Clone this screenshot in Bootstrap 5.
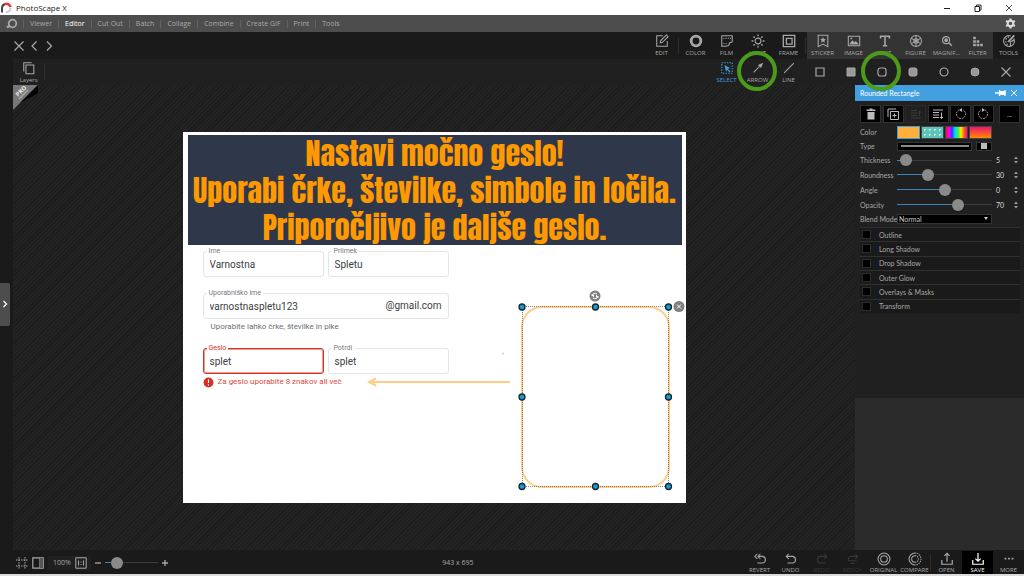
<!DOCTYPE html>
<html lang="en">
<head>
<meta charset="utf-8">
<meta name="viewport" content="width=device-width, initial-scale=1">
<title>PhotoScape X</title>
<link href="https://cdn.jsdelivr.net/npm/bootstrap@5.3.0/dist/css/bootstrap.min.css" rel="stylesheet">
<script src="https://cdn.jsdelivr.net/npm/bootstrap@5.3.0/dist/js/bootstrap.bundle.min.js" defer></script>
<style>
:root{--ui:"Open Sans","Noto Sans",sans-serif;--ink:#a8a8a8;--accent:#42a0e0}
body{font-family:var(--ui);font-size:7px;line-height:10px;background:#1a1a1a;color:var(--ink)}
button,input,select{font:inherit;color:inherit;background:none;border:0;padding:0;border-radius:0}
svg{display:block;flex:none}
svg:not([fill]){fill:none}
svg:not([stroke]){stroke:currentColor}
.ic{width:14px;height:14px}
.titlebar{height:15px;background:#fff;color:#222;font-size:8px}
.titlebar button{width:31px;height:15px}
.menubar{height:17px;background:#4d4d4d}
.menubar a{color:#a9a9a9;text-decoration:none;padding:0 6px;border-left:1px solid #626262;line-height:8px}
.menubar a.current{color:#fff}
.toolrow{height:27px;padding-left:13px}
.tool{width:31px;height:27px;display:flex;flex-direction:column;align-items:center;justify-content:center;gap:1px;font-size:6px;line-height:8px;white-space:nowrap;position:relative;flex:none}
.bright{background:#333}
.rule{width:1px;height:16px;background:#2e2e2e;flex:none}
.toolrow .rule{margin:0 1px}
.optrow{min-height:26px;margin-left:13px;padding-right:3px;background:#202020}
.optrow .tool{height:26px}
.picked{color:#3f9fe0}
.ringed::after{content:"";position:absolute;width:40px;height:40px;left:-5px;top:-8px;border:4px solid #4c9a1a;border-radius:50%;z-index:5}
.edge{width:13px;padding-bottom:27px}
.edge button{width:10px;height:43px;background:#4d4d4d;color:#fff;border-radius:0 2px 2px 0}
.stage{background:repeating-linear-gradient(135deg,#1c1c1c 0 1px,#232323 1px 3px)}
.pro{position:absolute;left:0;top:0}
.photo{width:503px;min-height:371px;background:#fff;padding:3px 4px 0 5px;font-family:Roboto,sans-serif;color:#3c4043}
.headline{background:#2f384a;color:#ff9900;height:110px;margin:0 0 6px;font:400 30px/37px Impact,Anton,"Roboto Condensed",sans-serif;white-space:nowrap;text-align:center}
.signup{width:246px;margin-left:15px}
.field{position:relative;height:26px;border:1px solid #e3e5e8;border-radius:3px;font-size:10px;display:flex;align-items:center;padding:0 6px}
.field label{position:absolute;left:3px;top:-5px;padding:0 2px;background:#fff;font-size:7px;line-height:8px;color:#777b80}
.field input{width:100%;min-width:0;height:20px}
.field.bad{border-color:#d93025;box-shadow:inset 0 0 0 1px #eb9a94}
.field.bad label{color:#d93025}
.hint{font-size:8px;line-height:16px;color:#6b6f74}
.hint.bad{color:#dc4a40}
.passwords{margin-top:13px}
.shape{position:absolute;left:184px;top:156px}
.panel{width:169px;background:#202020;font-family:Lato,sans-serif}
.panelhead{background:var(--accent);color:#fff;height:16px;padding:0 6px 0 5px}
.panelbody{padding:4px 4px 0 5px}
.actions{margin-bottom:2px}
.sq{width:21px;height:18px;background:#000;border:1px solid #303030;display:flex;align-items:center;justify-content:center;color:#bbb}
.sq:disabled{background:none;color:#3a3a3a;border-color:#292929}
.prop{display:grid;grid-template-columns:37px 95px 1fr;align-items:center;height:15px}
.prop.tight{height:14px}
.swatch{width:23px;height:13px;border:1px solid #444}
.swatch.on{border-color:var(--accent)}
.s1{background:#ffb03b}
.s2{background:radial-gradient(#dff0c0 1px,transparent 1px) 0 0/5px 5px #5cc5bd}
.s3{background:linear-gradient(90deg,#f03,#f0f,#33f,#0df,#3e5,#fe0,#f60,#f0a)}
.s4{background:linear-gradient(#f0146e,#ff8a00)}
.type{height:9px;background:#000;border:1px solid #333;display:flex;align-items:center;justify-content:center}
.type i{height:2px;width:68px;background:#8a8a8a}
.type b{height:6px;width:6px;background:#bbb}
input[type=range]{-webkit-appearance:none;appearance:none;display:block;height:12px;width:100%;background:linear-gradient(90deg,#3787bd var(--v),#3c3c3c var(--v)) center/100% 1px no-repeat}
input[type=range]::-webkit-slider-thumb{-webkit-appearance:none;width:12px;height:12px;border-radius:50%;background:#8a8a8a}
.num{width:16px;color:#ddd}
.blend{appearance:none;background:#000;border:1px solid #333;height:10px;line-height:8px;padding-left:1px;color:#ccc;width:100%}
.fx{display:grid;grid-auto-rows:1fr;min-height:86px;margin-top:1px}
.fx div{background:#1a1a1a;border-top:1px solid #303030;display:flex;align-items:center;padding-left:2px;gap:8px}
.fx input{appearance:none;width:9px;height:9px;background:#000;border:1px solid #2c2c2c;margin:0}
.navpane{background:#2b2b2b;height:152px}
.statusbar{height:24px;padding-top:1px}
.statusbar .tool{height:23px;gap:0}
.zoombox{background:#202020;height:14px;padding:0 4px 0 5px}
input[type=range].zoomslider{width:53px}
.tool.off{color:#383838}
.baseline{height:2px;background:#dcdcdc}
</style>
</head>
<body>
<div class="d-flex flex-column min-vh-100">
<header>
 <div class="titlebar d-flex align-items-center">
  <svg class="me-1" width="12" height="12" viewBox="0 0 12 12"><path d="M2 10.500V6A4.500 4.500 0 0 1 5 2" stroke="#444" stroke-width="2"/><path d="M5 2.200A4 4 0 0 1 10.500 5" stroke="#e33" stroke-width="2.500"/><path d="M10.500 5.500A4 4 0 0 1 6 10" stroke="#ccc" stroke-width="2"/></svg>
  <span class="me-auto">PhotoScape X</span>
  <button aria-label="Minimize"><svg class="mx-auto" width="8" height="8" viewBox="0 0 8 8"><path d="M1 4.500h6"/></svg></button>
  <button aria-label="Restore"><svg class="mx-auto" width="8" height="8" viewBox="0 0 8 8"><path d="M1 2.500h4.500v5H1zM2.500 2V1H7v5H6"/></svg></button>
  <button aria-label="Close"><svg class="mx-auto" width="8" height="8" viewBox="0 0 8 8"><path d="m1 1 6 6m0-6L1 7" stroke-width=".8"/></svg></button>
 </div>
 <nav class="menubar d-flex align-items-center">
  <svg class="ms-1 me-1" width="15" height="12" viewBox="0 0 15 12"><circle cx="8.500" cy="5.500" r="3.800" stroke-width="1.800"/><path d="M3 9.500 6 7.500" stroke-width="2.200"/></svg>
  <a href="#">Viewer</a><a href="#" class="current">Editor</a><a href="#">Cut Out</a><a href="#">Batch</a><a href="#">Collage</a><a href="#">Combine</a><a href="#">Create GIF</a><a href="#">Print</a><a href="#">Tools</a>
  <button class="ms-auto me-2" aria-label="Settings"><svg width="11" height="11" viewBox="0 0 12 12" stroke="#ddd"><circle cx="6" cy="6" r="3" stroke-width="2.200"/><path d="M6 .5v2M6 9.500v2M1.200 3.200l1.800 1M9 7.800l1.800 1M1.200 8.800l1.800-1M9 4.200l1.800-1" stroke-width="2.400"/></svg></button>
 </nav>
 <div class="toolrow d-flex align-items-center">
  <button class="me-1" aria-label="Close file"><svg width="12" height="12" viewBox="0 0 12 12" stroke-width="1.200"><path d="m1.500 1.500 9 9m0-9-9 9"/></svg></button>
  <button class="me-1" aria-label="Previous"><svg width="10" height="12" viewBox="0 0 10 12" stroke-width="1.200"><path d="M7.500 1.500 3 6l4.500 4.500"/></svg></button>
  <button class="me-auto" aria-label="Next"><svg width="12" height="12" viewBox="0 0 12 12" stroke-width="1.200"><path d="M4 1.500 8.500 6 4 10.500"/></svg></button>
  <button class="tool"><svg class="ic" viewBox="0 0 16 16" stroke-width="1.200"><path d="M9 2H2v12h12V8M6 10l.5-2.500L13 1l2 2-6.500 6.500z"/></svg>EDIT</button>
  <span class="rule"></span>
  <button class="tool"><svg class="ic" viewBox="0 0 16 16"><circle cx="8" cy="8" r="5.500" stroke-width="3.200"/></svg>COLOR</button>
  <button class="tool"><svg class="ic" viewBox="0 0 16 16" stroke-width="1.200"><path d="M2 2h12v7l-3 1-1 3-3 1H2z"/><path d="M4 5h9M4 11h5" stroke-dasharray="1 1.500"/></svg>FILM</button>
  <button class="tool"><svg class="ic" viewBox="0 0 16 16" stroke-width="1.200"><circle cx="8" cy="8" r="3.300"/><path d="M8 .7v2M8 13.300v2M.7 8h2M13.300 8h2M2.800 2.800l1.500 1.500M11.700 11.700l1.500 1.500M2.800 13.200l1.500-1.500M11.700 4.300l1.500-1.500" stroke-width="1.500"/></svg>LIGHT</button>
  <button class="tool"><svg class="ic" viewBox="0 0 16 16"><path d="M1.500 1.500h13v13h-13zM5 5h6.500v6.500H5z" stroke-width="1.500"/></svg>FRAME</button>
  <span class="rule"></span>
  <div class="bright d-flex">
  <button class="tool"><svg class="ic" viewBox="0 0 16 16" stroke-width="1.200"><path d="M2.500 1.500h11v13L8 11.500l-5.500 3z"/><path d="m8 3.500 1 2.200 2.300.2-1.700 1.500.5 2.300L8 8.500 5.900 9.700l.5-2.300-1.700-1.500 2.300-.2z" fill="currentColor" stroke="none"/></svg>STICKER</button>
  <button class="tool"><svg class="ic" viewBox="0 0 16 16" stroke-width="1.200"><path d="M1.500 2.500h13v11h-13z"/><path d="m3 11 3-4 2.500 2.500L10 8l3 3v1H3z" fill="currentColor" stroke="none"/><circle cx="5" cy="5" r="1" fill="currentColor" stroke="none"/></svg>IMAGE</button>
  <button class="tool"><svg class="ic" viewBox="0 0 16 16"><path d="M3 5V2.500h10V5M8 2.500v11M5.500 13.500h5" stroke-width="1.800"/></svg>TEXT</button>
  <button class="tool"><svg class="ic" viewBox="0 0 16 16" stroke-width="1.200"><circle cx="8" cy="8" r="6.300"/><path d="M8 2v12M2.700 5l10.600 6M13.300 5 2.700 11"/><circle cx="8" cy="8" r="2.500"/></svg>FIGURE</button>
  <button class="tool"><svg class="ic" viewBox="0 0 16 16" stroke-width="1.200"><circle cx="7" cy="7" r="4"/><circle cx="7" cy="7" r="1.500" fill="currentColor"/><path d="m10 10 3.500 3.500" stroke-width="1.800"/></svg>MAGNIF...</button>
  <button class="tool"><svg class="ic" viewBox="0 0 16 16"><path d="M4 14V2M8 14V6M12 14v-4" stroke-width="3" stroke-dasharray="3 1"/></svg>FILTER</button>
  </div>
  <button class="tool"><svg class="ic" viewBox="0 0 16 16" stroke-width="1.200"><path d="M10 2.200A6.200 6.200 0 1 0 13.800 6c-1 3-3 1.500-4 3s1 3-.8 5"/><path d="m7 9 7-7.500" stroke-width="2"/><path d="M4 5.500h1.500M6.500 3.500H8M3.500 9H5M5 12h1.500" stroke-width="1.600"/></svg>TOOLS</button>
 </div>
 <div class="optrow d-flex align-items-center">
  <button class="tool"><svg class="ic" viewBox="0 0 16 16" stroke-width="1.200"><path d="M4.500 4.500h9v10h-9zM2 12V2h9"/></svg>Layers</button>
  <span class="rule me-auto"></span>
  <button class="tool picked"><svg class="ic" viewBox="0 0 16 16" stroke-width="1.200"><path d="M2 2h12v12H2z" stroke-dasharray="1.500 1.500"/><path d="M5 4.500 11.500 8 9 9l3 3-1 1-3-3-1 2.500z" fill="currentColor" stroke="none"/></svg>SELECT</button>
  <button class="tool ringed"><svg class="ic" viewBox="0 0 16 16" stroke-width="1.200"><path d="m3 13 7-7"/><path d="m14 2-2.500 6-3.500-3.500z" fill="currentColor" stroke="none"/></svg>ARROW</button>
  <button class="tool"><svg class="ic" viewBox="0 0 16 16" stroke-width="1.200"><path d="M2.500 13.500 13.500 2.500"/></svg>LINE</button>
  <button class="tool" aria-label="Rectangle"><svg width="10" height="10" viewBox="0 0 10 10" stroke-width="1.200"><path d="M1 1h8v8H1z"/></svg></button>
  <button class="tool" aria-label="Filled rectangle"><svg width="10" height="10" viewBox="0 0 10 10"><path d="M1 1h8v8H1z" fill="#999"/></svg></button>
  <button class="tool ringed" aria-label="Rounded rectangle"><svg width="10" height="10" viewBox="0 0 10 10" stroke-width="1.200"><rect x="1" y="1" width="8" height="8" rx="2.300"/></svg></button>
  <button class="tool" aria-label="Filled rounded rectangle"><svg width="10" height="10" viewBox="0 0 10 10"><rect x="1" y="1" width="8" height="8" rx="2" fill="#999"/></svg></button>
  <button class="tool" aria-label="Circle"><svg width="10" height="10" viewBox="0 0 10 10" stroke-width="1.200"><circle cx="5" cy="5" r="4"/></svg></button>
  <button class="tool" aria-label="Filled circle"><svg width="10" height="10" viewBox="0 0 10 10"><circle cx="5" cy="5" r="4" fill="#999"/></svg></button>
  <button class="tool" aria-label="Close tools"><svg width="10" height="10" viewBox="0 0 10 10" stroke-width="1.200"><path d="m.5.500 9 9m0-9-9 9"/></svg></button>
 </div>
</header>

<main class="d-flex flex-grow-1">
 <div class="edge d-flex align-items-center flex-shrink-0"><button aria-label="Open browser"><svg class="mx-auto" width="6" height="8" viewBox="0 0 6 8" stroke-width="1.200"><path d="m1.500 1 3 3-3 3"/></svg></button></div>
 <section class="stage flex-grow-1 d-flex align-items-center justify-content-center position-relative">
  <svg class="pro" width="26" height="26" viewBox="0 0 26 26" stroke="none"><path d="M0 0h25L0 25z" fill="#777"/><path d="M25 0v8L7 18z" fill="#000"/><text transform="translate(5 12) rotate(-45)" font-size="6" font-weight="700" fill="#eee">PRO</text><path d="m6 14 9-9" stroke="#aaa" stroke-width="1.500"/></svg>
  <div class="photo position-relative">
   <h1 class="headline">Nastavi močno geslo!<br>Uporabi črke, številke, simbole in ločila.<br>Priporočljivo je daljše geslo.</h1>
   <form class="signup" lang="sl">
    <div class="d-flex gap-1">
     <div class="field flex-fill"><label for="first">Ime</label><input id="first" value="Varnostna"></div>
     <div class="field flex-fill"><label for="last">Priimek</label><input id="last" value="Spletu"></div>
    </div>
    <div class="field mt-3"><label for="user">Uporabniško ime</label><input id="user" value="varnostnaspletu123"><span>@gmail.com</span></div>
    <div class="hint ps-2">Uporabite lahko črke, številke in pike</div>
    <div class="d-flex gap-1 passwords">
     <div class="field bad flex-fill"><label for="pass">Geslo</label><input id="pass" value="splet"></div>
     <div class="field flex-fill"><label for="again">Potrdi</label><input id="again" value="splet"></div>
    </div>
    <div class="hint bad d-flex align-items-center gap-1"><svg width="11" height="11" viewBox="0 0 10 10" stroke="none"><circle cx="5" cy="5" r="4.500" fill="#d93025"/><path d="M5 2.300v3.200M5 6.500v1.200" stroke="#fff"/></svg><span>Za geslo uporabite 8 znakov ali več</span></div>
   </form>
   <svg class="shape" width="318" height="206" viewBox="0 0 318 206">
    <g stroke="#ffcd85" stroke-width="2"><path d="M143 94H3M9 90.500 2 94l7 3.500"/><rect x="155" y="19" width="147" height="180" rx="20"/></g>
    <circle cx="136" cy="65.500" r="1" fill="#ccc" stroke="none"/>
    <rect x="155.500" y="18.500" width="146" height="180" stroke="#555" stroke-opacity=".7" stroke-dasharray="1 1" stroke-dashoffset=".5"/>
    <g fill="#159bd2" stroke="#16262e" stroke-width="1.300"><circle cx="155" cy="19" r="3"/><circle cx="228.500" cy="19" r="3"/><circle cx="301.500" cy="19" r="3"/><circle cx="155" cy="109" r="3"/><circle cx="301.500" cy="109" r="3"/><circle cx="155" cy="198.500" r="3"/><circle cx="228.500" cy="198.500" r="3"/><circle cx="301.500" cy="198.500" r="3"/></g>
    <g fill="#808080" stroke="none"><circle cx="228" cy="8" r="5.500"/><circle cx="312" cy="18.500" r="5.500"/></g>
    <path d="m310 16.500 4 4m0-4-4 4M225 8a3 3 0 0 1 5-2M231 8a3 3 0 0 1-5 2" stroke="#fff"/><path d="M224 6.500h3v3zM232 9.500h-3v-3z" fill="#fff" stroke="none"/>
   </svg>
  </div>
 </section>
 <aside class="panel flex-shrink-0 d-flex flex-column">
  <div class="panelhead d-flex align-items-center">
   <span class="me-auto">Rounded Rectangle</span>
   <button class="me-1" aria-label="Pin"><svg width="11" height="8" viewBox="0 0 11 8"><path d="M0 4h4M4.500 1v6M10 1v6" stroke-width="1.300"/><path d="M5 2.500h5v3H5z" fill="#fff"/></svg></button>
   <button aria-label="Close panel"><svg width="8" height="8" viewBox="0 0 8 8"><path d="m1 1 6 6m0-6L1 7"/></svg></button>
  </div>
  <div class="panelbody">
   <div class="actions d-flex justify-content-between">
    <button class="sq" aria-label="Delete"><svg width="12" height="12" viewBox="0 0 12 12"><path d="M2.500 4h7v7.500h-7zM4.500.500h3v1h3v1.500h-9V1.500h3z" fill="currentColor" stroke="none"/></svg></button>
    <button class="sq" aria-label="Duplicate"><svg width="12" height="12" viewBox="0 0 12 12"><path d="M3.500 3.500h8v8h-8zM1 9V1h8M7.500 5.500v4M5.500 7.500h4"/></svg></button>
    <button class="sq" disabled aria-label="Bring forward"><svg width="12" height="12" viewBox="0 0 12 12"><path d="M1 2.500h6M1 5h6M1 7.500h6M1 10h10M9.500 8V3M8 4.500 9.500 3 11 4.500"/></svg></button>
    <button class="sq" aria-label="Send back"><svg width="12" height="12" viewBox="0 0 12 12"><path d="M1 2h10M1 4.500h6M1 7h6M1 9.500h6M9.500 4.500v6M8 9l1.500 1.500L11 9"/></svg></button>
    <button class="sq" aria-label="Rotate left"><svg width="12" height="12" viewBox="0 0 12 12"><path d="M4 2a4.500 4.500 0 1 0 4 0" stroke-dasharray="1.500 1"/><path d="M7 0v4L4 2z" fill="currentColor" stroke="none"/></svg></button>
    <button class="sq" aria-label="Rotate right"><svg width="12" height="12" viewBox="0 0 12 12"><path d="M8 2a4.500 4.500 0 1 1-4 0" stroke-dasharray="1.500 1"/><path d="M5 0v4l3-2z" fill="currentColor" stroke="none"/></svg></button>
    <button class="sq ms-1">...</button>
   </div>
   <div class="prop tight"><span>Color</span><div class="d-flex justify-content-between"><button class="swatch on s1" aria-label="Solid"></button><button class="swatch s2" aria-label="Pattern"></button><button class="swatch s3" aria-label="Rainbow"></button><button class="swatch s4" aria-label="Gradient"></button></div></div>
   <div class="prop tight"><span>Type</span><div class="d-flex gap-1"><button class="type flex-fill" aria-label="Line type"><i></i></button><button class="type px-1" aria-label="Corner type"><b></b></button></div></div>
   <div class="prop tight"><label for="thick">Thickness</label><input id="thick" type="range" value="4" style="--v:4%"><div class="d-flex ps-1"><span class="num">5</span><svg width="8" height="10" viewBox="0 0 8 10" stroke="none" fill="#999"><path d="M2 4 4 1.500 6 4zM2 6h4L4 8.500z"/></svg></div></div>
   <div class="prop"><label for="round">Roundness</label><input id="round" type="range" value="30" style="--v:30%"><div class="d-flex ps-1"><span class="num">30</span><svg width="8" height="10" viewBox="0 0 8 10" stroke="none" fill="#999"><path d="M2 4 4 1.500 6 4zM2 6h4L4 8.500z"/></svg></div></div>
   <div class="prop"><label for="angle">Angle</label><input id="angle" type="range" value="50" style="--v:50%"><div class="d-flex ps-1"><span class="num">0</span><svg width="8" height="10" viewBox="0 0 8 10" stroke="none" fill="#999"><path d="M2 4 4 1.500 6 4zM2 6h4L4 8.500z"/></svg></div></div>
   <div class="prop"><label for="opac">Opacity</label><input id="opac" type="range" value="66" style="--v:66%"><div class="d-flex ps-1"><span class="num">70</span><svg width="8" height="10" viewBox="0 0 8 10" stroke="none" fill="#999"><path d="M2 4 4 1.500 6 4zM2 6h4L4 8.500z"/></svg></div></div>
   <div class="prop tight"><label for="blend" class="text-nowrap">Blend Mode</label><div class="position-relative"><select id="blend" class="blend d-block"><option>Normal</option></select><svg class="position-absolute end-0 top-50 translate-middle" width="6" height="4" viewBox="0 0 6 4" stroke="none" fill="#ccc"><path d="M1 0h4L3 3z"/></svg></div></div>
   <div class="fx">
    <div><input type="checkbox" id="f1"><label for="f1">Outline</label></div>
    <div><input type="checkbox" id="f2"><label for="f2">Long Shadow</label></div>
    <div><input type="checkbox" id="f3"><label for="f3">Drop Shadow</label></div>
    <div><input type="checkbox" id="f4"><label for="f4">Outer Glow</label></div>
    <div><input type="checkbox" id="f5"><label for="f5">Overlays &amp; Masks</label></div>
    <div><input type="checkbox" id="f6"><label for="f6">Transform</label></div>
   </div>
  </div>
  <div class="navpane mt-auto"></div>
 </aside>
</main>

<footer>
 <div class="statusbar d-flex align-items-center justify-content-between">
  <div class="d-flex align-items-center ps-3">
   <button aria-label="Grid"><svg width="12" height="12" viewBox="0 0 12 12"><path d="M3 0v12M9 0v12M0 3h12M0 9h12" stroke-dasharray="1.500 1"/></svg></button>
   <button class="ms-1 me-1" aria-label="Side panel"><svg width="12" height="12" viewBox="0 0 12 12" stroke-width="1.200"><path d="M.8.800h10.400v10.400H.8zM8 1v10"/><path d="M8 1h3v10H8z" fill="#555" stroke="none"/></svg></button>
   <div class="zoombox d-flex align-items-center gap-1"><span>100%</span><button aria-label="Actual size"><svg width="12" height="12" viewBox="0 0 12 12"><path d="M.8.800h10.400v10.400H.8zM3.500 3.500v5M8.500 3.500v5M6 4.500v1M6 7v1"/></svg></button></div>
   <button class="mx-1" aria-label="Zoom out"><svg width="6" height="6" viewBox="0 0 6 6" stroke-width="1.300"><path d="M0 3h6"/></svg></button>
   <input class="zoomslider" type="range" value="15" aria-label="Zoom" style="--v:15%">
   <button class="mx-1" aria-label="Zoom in"><svg width="6" height="6" viewBox="0 0 6 6" stroke-width="1.300"><path d="M0 3h6M3 0v6"/></svg></button>
  </div>
  <div>943 x 695</div>
  <div class="d-flex">
   <button class="tool"><svg class="ic" viewBox="0 0 16 16" stroke-width="1.200"><path d="M5 2 2 5l3 3M8.500 2l-3 3 3 3M5.500 5H11a3.800 3.800 0 0 1 0 7.500H5"/></svg>REVERT</button>
   <button class="tool"><svg class="ic" viewBox="0 0 16 16" stroke-width="1.200"><path d="M5.500 2l-3 3 3 3M2.500 5H10a3.800 3.800 0 0 1 0 7.500H4"/></svg>UNDO</button>
   <button class="tool off"><svg class="ic" viewBox="0 0 16 16" stroke-width="1.200"><path d="m10.500 2 3 3-3 3M13.500 5H6a3.800 3.800 0 0 0 0 7.500h6"/></svg>REDO</button>
   <button class="tool off"><svg class="ic" viewBox="0 0 16 16" stroke-width="1.200"><path d="m10.500 2 3 3-3 3M13.500 5H6a3.500 3.500 0 0 0-3 5h9M5 13h5"/></svg>REDO+</button>
   <button class="tool"><svg class="ic" viewBox="0 0 16 16" stroke-width="1.200"><circle cx="8" cy="8" r="6.800"/><circle cx="8" cy="8" r="3.800"/></svg>ORIGINAL</button>
   <button class="tool"><svg class="ic" viewBox="0 0 16 16" stroke-width="1.200"><path d="M8 1.200a6.800 6.800 0 0 0 0 13.600M8 4.200a3.800 3.800 0 0 0 0 7.600"/><path d="M8 1.200a6.800 6.800 0 0 1 0 13.600M8 4.200a3.800 3.800 0 0 1 0 7.600" stroke-dasharray="1.500 1"/></svg>COMPARE</button>
   <span class="rule align-self-center"></span>
   <button class="tool"><svg class="ic" viewBox="0 0 16 16"><path d="M2 9v5h12V9M8 11V1.500M5 4.500l3-3 3 3" stroke-width="1.400"/></svg>OPEN</button>
   <button class="tool bg-black text-white"><svg class="ic" viewBox="0 0 16 16"><path d="M2 9v5h12V9M8 1v9.500M5 7.500l3 3 3-3" stroke-width="1.400"/></svg>SAVE</button>
   <button class="tool"><svg class="ic" viewBox="0 0 16 16"><path d="M3 7.500h10" stroke-width="2" stroke-dasharray="2 2"/></svg>MORE</button>
  </div>
 </div>
 <div class="baseline"></div>
</footer>
</div>
</body>
</html>
